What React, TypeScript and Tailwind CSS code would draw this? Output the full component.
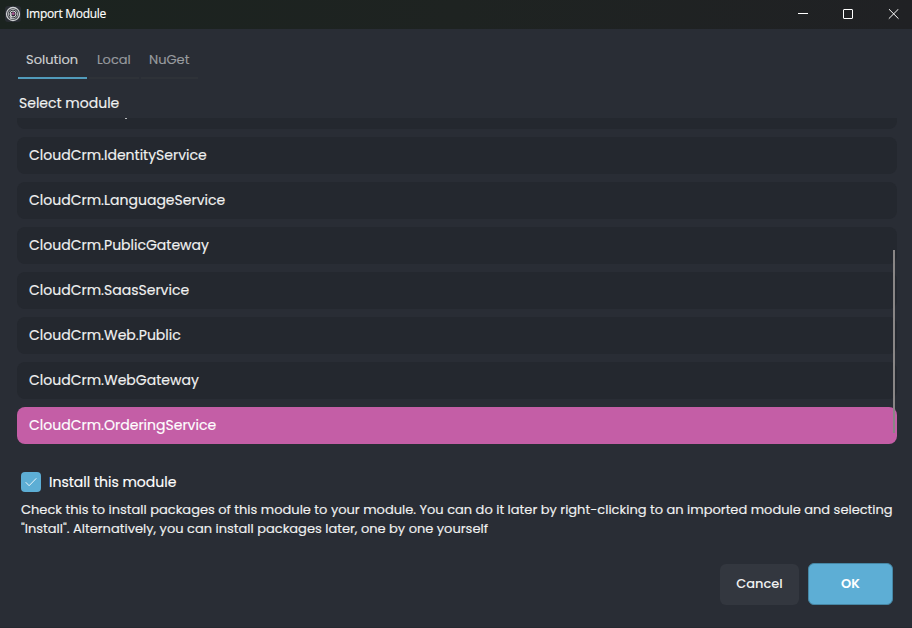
const modules = [
  { name: 'CloudCrm.IdentityService' },
  { name: 'CloudCrm.LanguageService' },
  { name: 'CloudCrm.PublicGateway' },
  { name: 'CloudCrm.SaasService' },
  { name: 'CloudCrm.Web.Public' },
  { name: 'CloudCrm.WebGateway' },
  { name: 'CloudCrm.OrderingService', selected: true },
];

function Logo() {
  return (
    <svg width="16" height="16" viewBox="0 0 16 16" fill="none" className="shrink-0">
      <rect width="16" height="16" rx="3" fill="#292d33" />
      <circle cx="8" cy="8" r="6.5" stroke="#cfd1d3" strokeWidth="1.3" />
      <circle cx="8" cy="8" r="4.7" stroke="#b5b8ba" strokeWidth="1" />
      <circle cx="8" cy="8" r="3" stroke="#d5d7d8" strokeWidth="1" />
      <path d="M6 7v6" stroke="#e3e4e5" strokeWidth="1.1" />
      <circle cx="8.3" cy="7.7" r="1.4" fill="#a6548f" />
    </svg>
  );
}

function TitleBar() {
  return (
    <header className="flex h-[29px] shrink-0 items-center bg-gradient-to-r from-[#1b231f] via-[#1e2321] to-[#202124] pb-px pl-[5px]">
      <Logo />
      <span className="ml-[5px] font-['Open_Sans',sans-serif] text-[12px] leading-4 tracking-[-0.29px] text-white">
        Import Module
      </span>
      <div className="-mr-1 ml-auto flex text-white">
        <span className="flex h-7 w-[45px] items-center justify-center">
          <svg width="11" height="11" stroke="currentColor"><path d="M0 4.5h10" /></svg>
        </span>
        <span className="flex h-7 w-[45px] items-center justify-center">
          <svg width="11" height="11" fill="none" stroke="currentColor"><rect x=".5" y=".5" width="9" height="9" rx=".5" /></svg>
        </span>
        <span className="flex h-7 w-[45px] items-center justify-center">
          <svg width="11" height="11" stroke="currentColor"><path d="M.8 0l9.7 9.7M10.5 0L.8 9.7" /></svg>
        </span>
      </div>
    </header>
  );
}

export default function App() {
  return (
    <div className="flex h-[628px] w-[912px] flex-col overflow-hidden bg-[#292d35] font-['Poppins',Inter,sans-serif] text-[14px] text-[#f0f1f1] [-webkit-text-stroke:0.15px]">
      <TitleBar />
      <main className="flex flex-col pt-[14px]">
        <nav className="ml-[18px] flex gap-[2px] text-[13px] leading-[20px] text-[#989b9f]">
          <div className="h-9 w-[69px] border-b-2 border-[#519bbb] pl-2 pt-[7px] text-[#cfd1d3]">Solution</div>
          <div className="h-9 w-[50px] border-b-2 border-[#2e3238] pl-2 pt-[7px]">Local</div>
          <div className="h-9 w-[57px] border-b-2 border-[#2e3238] pl-2 pt-[7px]">NuGet</div>
        </nav>
        <h1 className="ml-[19px] mt-[14px] h-[25px] leading-5">Select module</h1>

        <section className="relative ml-[17px] flex h-[326px] w-[880px] flex-col gap-2">
          <div className="h-[11px] shrink-0 rounded-b-lg bg-[#24282f] pl-[108px]">
            <div className="h-px w-[2px] bg-[#b9bbbd]" />
          </div>
          {modules.map((m) => (
            <div
              key={m.name}
              className={`flex h-[37px] shrink-0 items-center rounded-lg pl-3 ${
                m.selected ? 'bg-[#c45ea6] text-white' : 'bg-[#24282f]'
              }`}
            >
              {m.name}
            </div>
          ))}
          <div className="absolute right-[2px] top-[132px] h-[183px] w-[2px] bg-[#898686]" />
        </section>

        <section className="ml-[21px] mt-7">
          <label className="flex h-5 items-center gap-2 text-white">
            <span className="flex h-5 w-5 items-center justify-center rounded-[4px] bg-[#5daed5]">
              <svg width="12" height="12" viewBox="0 0 12 12" fill="none" stroke="#e9f5fa" strokeWidth="1">
                <path d="M.7 6.2l3.4 3.5L11.3 2.3" />
              </svg>
            </span>
            Install this module
          </label>
          <p className="mt-2 whitespace-nowrap text-[13px] leading-[19px]">
            Check this to install packages of this module to your module. You can do it later by right-clicking to an imported module and selecting
            <br />
            "Install". Alternatively, you can install packages later, one by one yourself
          </p>
        </section>

        <footer className="mr-[19px] mt-[25px] flex items-center justify-end gap-[9px] text-[13px] [-webkit-text-stroke:0px]">
          <button className="h-[41px] w-[79px] rounded-md bg-[#33373f] font-medium">Cancel</button>
          <button className="h-[42px] w-[85px] rounded-md border border-[#4687a5] bg-[#5daed5] font-semibold text-white">OK</button>
        </footer>
      </main>
      <div className="mt-auto h-px shrink-0 bg-[#252930]" />
    </div>
  );
}
